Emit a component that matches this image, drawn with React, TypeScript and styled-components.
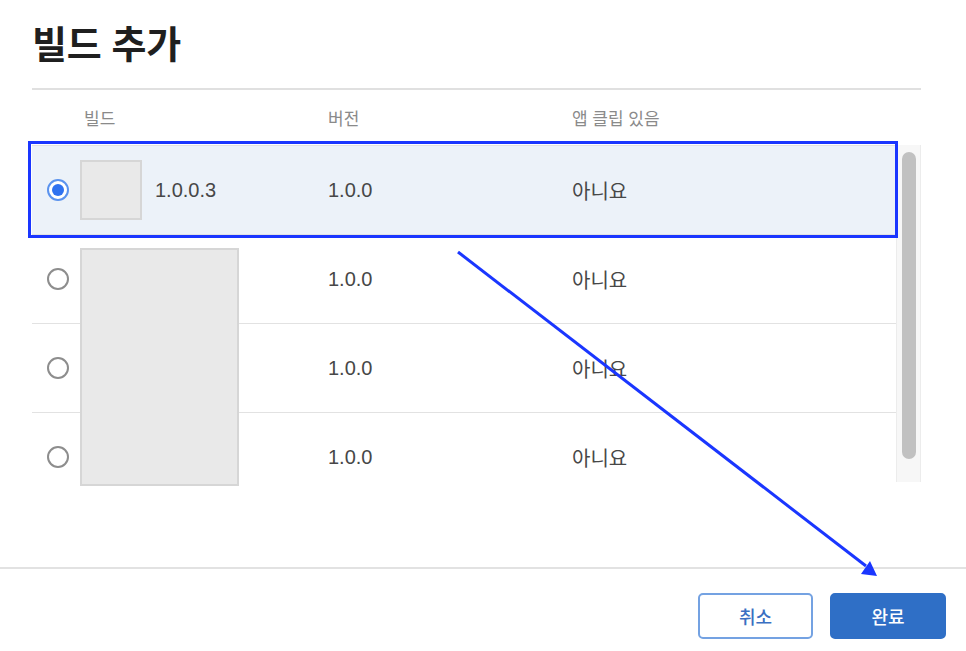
import React from "react";
import styled, { createGlobalStyle } from "styled-components";

const Global = createGlobalStyle`
  html, body { margin: 0; padding: 0; background: #ffffff; }
  body {
    font-family: "Liberation Sans", "Noto Sans CJK KR", sans-serif;
    -webkit-font-smoothing: antialiased;
  }
  * { box-sizing: border-box; }
`;

const Page = styled.div`
  position: relative;
  width: 966px;
  height: 651px;
  overflow: hidden;
  display: flex;
  flex-direction: column;
  padding-top: 24px;
`;

const Title = styled.h1`
  margin: 0 0 22px 32px;
  font-size: 38px;
  line-height: 42px;
  font-weight: 700;
  color: #1f1f1f;
  letter-spacing: -0.3px;
`;

const TableArea = styled.div`
  margin: 0 45px 0 32px;
  display: flex;
  flex-direction: column;
`;

const HeaderRow = styled.div`
  display: grid;
  grid-template-columns: 52px 244px 244px 1fr;
  align-items: center;
  height: 57px;
  border-top: 2px solid #e0e0e0;
  font-size: 17px;
  color: #8a8a8a;
`;

const HeaderCell = styled.div``;

const BodyWrap = styled.div`
  display: flex;
  align-items: flex-start;
`;

const Viewport = styled.div`
  flex: 1;
  height: 342px;
  overflow: hidden;
  border-top: 1px solid #e2e2e2;
`;

const Row = styled.div<{ $selected?: boolean }>`
  display: grid;
  grid-template-columns: 48px 248px 244px 1fr;
  grid-template-rows: 88px;
  align-items: center;
  border-bottom: 1px solid #e2e2e2;
  background: ${(p) => (p.$selected ? "#ecf2f9" : "#ffffff")};
  font-size: 20px;
  color: #474747;
`;

const RadioCell = styled.div`
  padding-left: 15px;
  display: flex;
  align-items: center;
`;

const Radio = styled.span<{ $checked?: boolean }>`
  width: 22px;
  height: 22px;
  border-radius: 50%;
  border: 2px solid ${(p) => (p.$checked ? "#5b93ee" : "#8d8d8d")};
  background: #ffffff;
  display: flex;
  align-items: center;
  justify-content: center;
  &::after {
    content: "";
    width: 12px;
    height: 12px;
    border-radius: 50%;
    background: ${(p) => (p.$checked ? "#2f72f0" : "transparent")};
  }
`;

const BuildCell = styled.div`
  display: flex;
  align-items: center;
  gap: 13px;
  height: 100%;
`;

const Thumb = styled.div<{ $tall?: boolean }>`
  position: relative;
  z-index: 1;
  flex: none;
  width: ${(p) => (p.$tall ? "159px" : "62px")};
  height: ${(p) => (p.$tall ? "238px" : "60px")};
  align-self: ${(p) => (p.$tall ? "flex-start" : "center")};
  margin-top: ${(p) => (p.$tall ? "13px" : "0")};
  background: #e9e9e9;
  border: 2px solid #d6d6d6;
`;

const Cell = styled.div``;

const Track = styled.div`
  flex: none;
  width: 25px;
  height: 337px;
  background: #f7f7f7;
  border-left: 1px solid #ececec;
  border-right: 1px solid #ececec;
  padding: 7px 0 0 5px;
`;

const ThumbBar = styled.div`
  width: 14px;
  height: 307px;
  border-radius: 7px;
  background: #c1c1c1;
`;

const Footer = styled.div`
  margin-top: auto;
  border-top: 2px solid #e2e2e2;
  height: 84px;
  display: flex;
  justify-content: flex-end;
  align-items: flex-start;
  gap: 17px;
  padding: 24px 20px 0 0;
`;

const Button = styled.button<{ $primary?: boolean }>`
  width: ${(p) => (p.$primary ? "116px" : "115px")};
  height: 46px;
  border-radius: 5px;
  font-family: "Liberation Sans", "Noto Sans CJK KR", sans-serif;
  font-size: 18px;
  font-weight: 500;
  cursor: pointer;
  border: 2px solid ${(p) => (p.$primary ? "#2f6fc6" : "#74a2e2")};
  background: ${(p) => (p.$primary ? "#2f6fc6" : "#ffffff")};
  color: ${(p) => (p.$primary ? "#ffffff" : "#3a6fc2")};
`;

const Overlay = styled.svg`
  position: absolute;
  left: 0;
  top: 0;
  pointer-events: none;
`;

type Build = { name: string; version: string; clip: string; tall?: boolean; blank?: boolean };

const builds: Build[] = [
  { name: "1.0.0.3", version: "1.0.0", clip: "아니요" },
  { name: "", version: "1.0.0", clip: "아니요", tall: true },
  { name: "", version: "1.0.0", clip: "아니요", blank: true },
  { name: "", version: "1.0.0", clip: "아니요", blank: true },
];

export default function App() {
  return (
    <>
      <Global />
      <Page>
        <Title>빌드 추가</Title>
        <TableArea>
          <HeaderRow>
            <HeaderCell />
            <HeaderCell>빌드</HeaderCell>
            <HeaderCell>버전</HeaderCell>
            <HeaderCell>앱 클립 있음</HeaderCell>
          </HeaderRow>
          <BodyWrap>
            <Viewport>
              {builds.map((b, i) => (
                <Row key={i} $selected={i === 0}>
                  <RadioCell>
                    <Radio $checked={i === 0} />
                  </RadioCell>
                  <BuildCell>
                    {!b.blank && <Thumb $tall={b.tall} />}
                    {b.name && <span>{b.name}</span>}
                  </BuildCell>
                  <Cell>{b.version}</Cell>
                  <Cell>{b.clip}</Cell>
                </Row>
              ))}
            </Viewport>
            <Track>
              <ThumbBar />
            </Track>
          </BodyWrap>
        </TableArea>
        <Footer>
          <Button>취소</Button>
          <Button $primary>완료</Button>
        </Footer>
        <Overlay width="966" height="651" viewBox="0 0 966 651">
          <rect x="29.5" y="142.5" width="867" height="94" fill="none" stroke="#1a36ff" strokeWidth="3" />
          <line x1="458" y1="252" x2="866" y2="566" stroke="#1a36ff" strokeWidth="3" />
          <polygon points="877,576 861,574 870,561" fill="#1a36ff" />
        </Overlay>
      </Page>
    </>
  );
}
